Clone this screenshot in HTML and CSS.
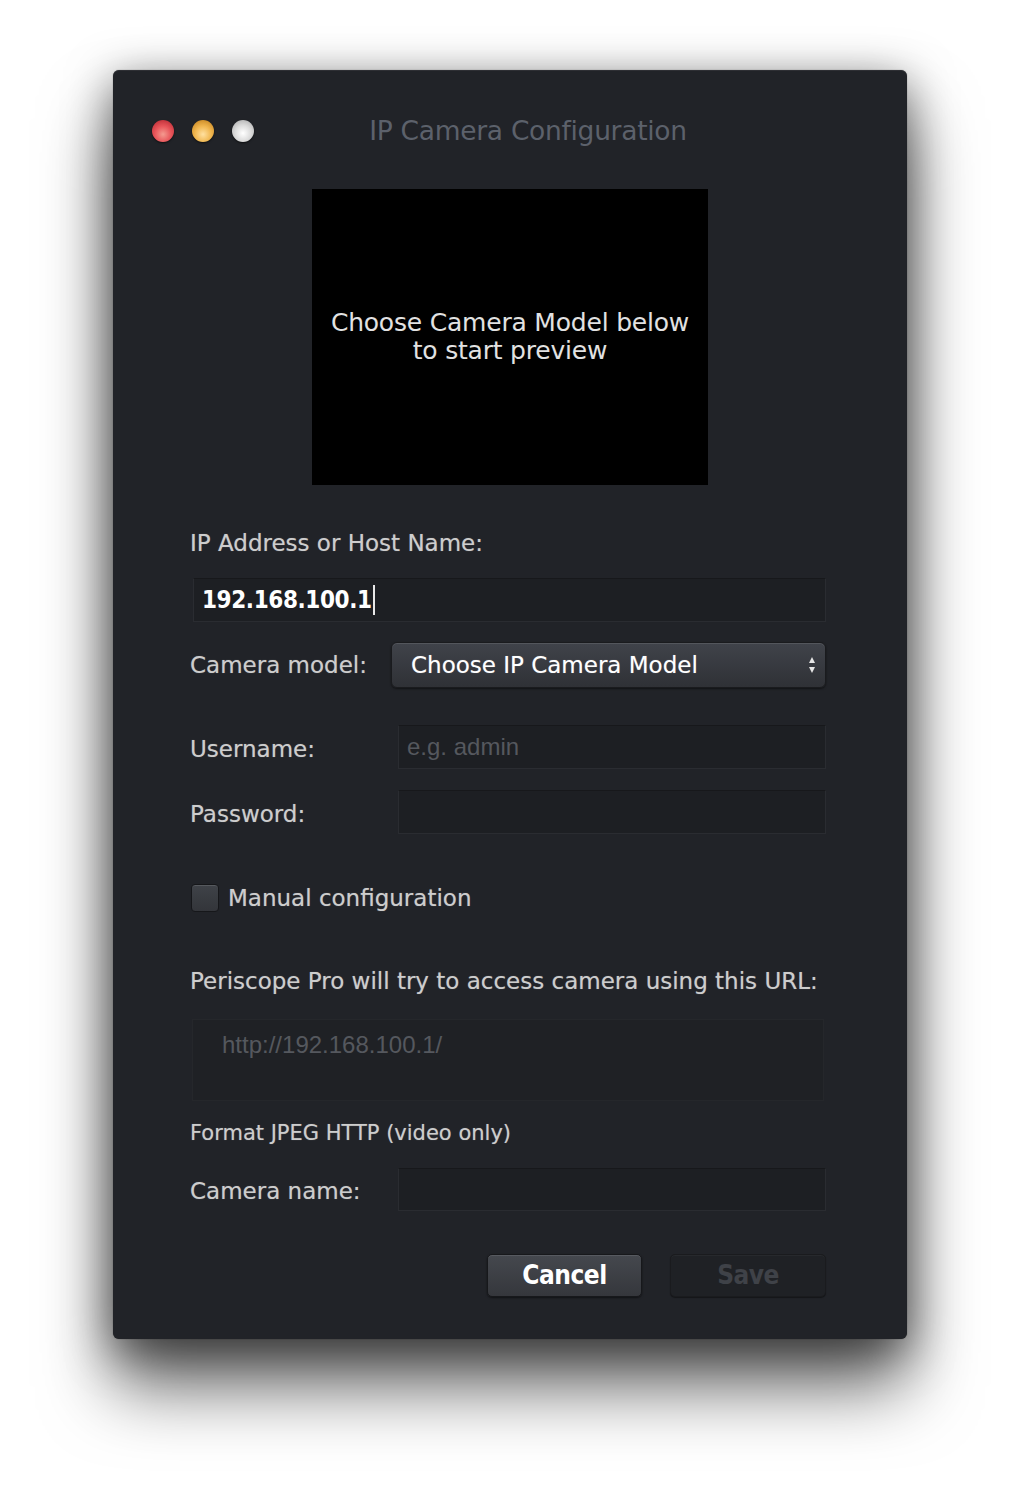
FILE: index.html
```html
<!DOCTYPE html>
<html>
<head>
<meta charset="utf-8">
<title>IP Camera Configuration</title>
<link rel="stylesheet" href="styles.css">
</head>
<body>
<div class="window">
  <div class="titlebar">
    <div class="lights">
      <span class="light red"></span>
      <span class="light yellow"></span>
      <span class="light gray"></span>
    </div>
    <div class="title">IP Camera Configuration</div>
  </div>

  <div class="preview">
    <p>Choose Camera Model below<br>to start preview</p>
  </div>

  <div class="form">
    <div class="label ip-label">IP Address or Host Name:</div>
    <div class="field ip-field"><span class="value">192.168.100.1</span><span class="caret"></span></div>

    <div class="row model-row">
      <div class="label row-label">Camera model:</div>
      <div class="select">
        <span class="select-text">Choose IP Camera Model</span>
        <span class="arrows"><span class="up"></span><span class="down"></span></span>
      </div>
    </div>

    <div class="row user-row">
      <div class="label row-label">Username:</div>
      <div class="field short"><span class="placeholder">e.g. admin</span></div>
    </div>

    <div class="row pass-row">
      <div class="label row-label">Password:</div>
      <div class="field short"></div>
    </div>

    <div class="check-row">
      <span class="checkbox"></span>
      <span class="label">Manual configuration</span>
    </div>

    <div class="label url-label">Periscope Pro will try to access camera using this URL:</div>
    <div class="url-box"><span class="url">http://192.168.100.1/</span></div>

    <div class="label format-label">Format JPEG HTTP (video only)</div>

    <div class="row name-row">
      <div class="label row-label">Camera name:</div>
      <div class="field short"></div>
    </div>

    <div class="buttons">
      <div class="btn cancel">Cancel</div>
      <div class="btn save">Save</div>
    </div>
  </div>
</div>
</body>
</html>
```

FILE: styles.css
```css
html, body {
  margin: 0;
  padding: 0;
  background: #ffffff;
}
body {
  width: 1020px;
  height: 1496px;
  overflow: hidden;
  font-family: "DejaVu Sans", sans-serif;
}
.window {
  box-sizing: border-box;
  width: 794px;
  height: 1269px;
  margin: 70px 0 0 113px;
  background: #212328;
  border-radius: 6px;
  box-shadow: 0 48px 70px rgba(0,0,0,0.6), 0 10px 45px rgba(0,0,0,0.5), 0 0 1px rgba(0,0,0,0.6), inset 0 1px 0 rgba(255,255,255,0.06);
  padding: 50px 81px 42px 77px;
}
.titlebar {
  height: 22px;
  display: flex;
  align-items: center;
  position: relative;
  margin-left: -38px;
}
.lights {
  display: flex;
  gap: 18px;
}
.light {
  width: 22px;
  height: 22px;
  border-radius: 50%;
  display: block;
}
.light.red {
  background: radial-gradient(circle at 50% 65%, #f49a8f 0%, #e8555a 45%, #c3343c 80%, #6e2a2a 100%);
  box-shadow: 0 1px 2px rgba(0,0,0,0.6);
}
.light.yellow {
  background: radial-gradient(circle at 50% 65%, #ffe0a0 0%, #f0b64f 45%, #cf8f2a 80%, #6e5020 100%);
  box-shadow: 0 1px 2px rgba(0,0,0,0.6);
}
.light.gray {
  background: radial-gradient(circle at 50% 60%, #ffffff 0%, #dcdcdc 45%, #b8b8b8 80%, #707070 100%);
  box-shadow: 0 1px 2px rgba(0,0,0,0.6);
}
.title {
  position: absolute;
  left: 0;
  right: -38px;
  top: -4px;
  text-align: center;
  font-size: 26.5px;
  line-height: 30px;
  color: #5c616b;
  letter-spacing: -0.3px;
  padding-left: 40px;
}
.preview {
  width: 396px;
  height: 296px;
  margin-top: 47px;
  margin-left: 122px;
  background: #000;
  display: flex;
  align-items: center;
  justify-content: center;
}
.preview p {
  margin: 0;
  text-align: center;
  font-size: 25px;
  line-height: 28px;
  color: #e2e2e2;
  letter-spacing: -0.2px;
}
.form {
  width: 636px;
}
.label {
  font-size: 23px;
  line-height: 28px;
  color: #cdcdcd;
  text-shadow: 0 0 1px rgba(255,255,255,0.35);
}
.ip-label {
  margin-top: 44px;
}
.field {
  box-sizing: border-box;
  height: 44px;
  background: #1d1f23;
  border: 1px solid #2a2c31;
  border-top-color: #17181b;
  display: flex;
  align-items: center;
}
.ip-field {
  margin: 21px 0 0 3px;
  width: 633px;
  padding-left: 8px;
}
.value {
  font-family: "DejaVu Sans Condensed", "DejaVu Sans", sans-serif;
  font-size: 24px;
  color: #ffffff;
  font-weight: bold;
  letter-spacing: -0.4px;
}
.caret {
  width: 2px;
  height: 30px;
  background: #e8e8e8;
  margin-left: 1px;
}
.row {
  display: flex;
  align-items: center;
}
.row-label {
  width: 208px;
  flex: none;
  padding-top: 3px;
}
.model-row {
  margin-top: 20px;
}
.model-row .row-label {
  width: 201px;
  padding-top: 0;
}
.select {
  box-sizing: border-box;
  width: 436px;
  height: 46px;
  border-radius: 6px;
  background: linear-gradient(#40434a, #2f3136);
  border: 1px solid #1a1b1e;
  box-shadow: inset 0 1px 0 rgba(255,255,255,0.1), 0 1px 2px rgba(0,0,0,0.5);
  display: flex;
  align-items: center;
  justify-content: space-between;
  padding: 0 10px 0 19px;
}
.select-text {
  font-size: 23px;
  color: #ffffff;
  text-shadow: 0 0 1px rgba(255,255,255,0.4);
}
.arrows {
  display: flex;
  flex-direction: column;
  gap: 4px;
  align-items: center;
}
.up {
  width: 0; height: 0;
  border-left: 3px solid transparent;
  border-right: 3px solid transparent;
  border-bottom: 6px solid #e6e6e6;
}
.down {
  width: 0; height: 0;
  border-left: 3px solid transparent;
  border-right: 3px solid transparent;
  border-top: 6px solid #e6e6e6;
}
.short {
  width: 428px;
  padding-left: 8px;
}
.user-row {
  margin-top: 37px;
}
.pass-row {
  margin-top: 21px;
}
.placeholder {
  font-family: "Liberation Sans", Arial, sans-serif;
  font-size: 24px;
  color: #55585e;
}
.check-row {
  margin-top: 50px;
  display: flex;
  align-items: center;
  gap: 9px;
}
.checkbox {
  box-sizing: border-box;
  width: 28px;
  height: 28px;
  margin-left: 1px;
  border-radius: 4px;
  background: linear-gradient(#3f4248, #33353a);
  border: 1px solid #16171a;
  box-shadow: inset 0 1px 0 rgba(255,255,255,0.12);
}
.url-label {
  margin-top: 55px;
}
.url-box {
  box-sizing: border-box;
  margin: 24px 0 0 2px;
  width: 632px;
  height: 82px;
  background: #1f2125;
  border: 1px solid #25272b;
  padding: 11px 0 0 29px;
}
.url {
  font-family: "Liberation Sans", Arial, sans-serif;
  font-size: 24px;
  color: #55585e;
}
.format-label {
  margin-top: 18px;
  font-size: 21px;
  line-height: 28px;
}
.name-row {
  margin-top: 21px;
}
.name-row .field {
  height: 43px;
}
.buttons {
  margin-top: 43px;
  display: flex;
  justify-content: flex-end;
  gap: 28px;
}
.btn {
  box-sizing: border-box;
  height: 43px;
  border-radius: 5px;
  display: flex;
  align-items: center;
  justify-content: center;
  font-family: "DejaVu Sans Condensed", "DejaVu Sans", sans-serif;
  font-size: 26px;
  font-weight: bold;
  letter-spacing: -0.5px;
  padding-bottom: 2px;
}
.cancel {
  width: 155px;
  background: linear-gradient(#45484e, #35373c);
  border: 1px solid #17181b;
  box-shadow: inset 0 1px 0 rgba(255,255,255,0.1), 0 1px 2px rgba(0,0,0,0.5);
  color: #ffffff;
}
.save {
  width: 156px;
  background: #1f2125;
  border: 1px solid #1a1b1e;
  box-shadow: inset 0 1px 0 rgba(255,255,255,0.04), 0 1px 1px rgba(0,0,0,0.4);
  color: #3f4248;
}
```
